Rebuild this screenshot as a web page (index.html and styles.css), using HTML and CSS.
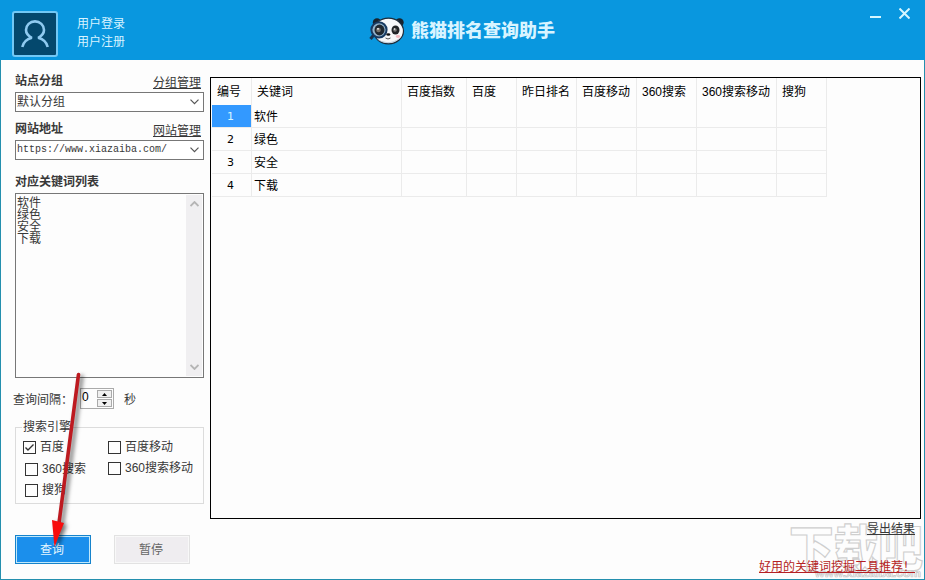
FILE: index.html
```
<!DOCTYPE html>
<html lang="zh-CN">
<head>
  <meta charset="UTF-8">
  <title>熊猫排名查询助手</title>
  <link rel="stylesheet" href="styles.css">
</head>
<body>

  <header class="header">
    <div class="user">
      <div class="avatar">
        <svg width="28" height="28" viewBox="0 0 28 28">
          <path d="M1.300 27C2.300 22.500 5.500 19.300 10.800 17.800C7.500 16 5 13.200 5 10A9 8.600 0 0 1 23 10C23 13.200 20.500 16 17.200 17.800C22.500 19.300 25.700 22.500 26.700 27"/>
        </svg>
      </div>
      <div class="user-links">
        <a>用户登录</a>
        <a>用户注册</a>
      </div>
    </div>
    <div class="brand">
      <svg width="36" height="28" viewBox="0 0 36 28">
        <circle cx="8" cy="5.500" r="4.200" fill="#17232e"/>
        <circle cx="30.500" cy="5.500" r="4.200" fill="#17232e"/>
        <ellipse cx="19.500" cy="14" rx="15" ry="12.800" fill="#f7f8fa" stroke="#1d2c3b" stroke-width="1.200"/>
        <path d="M8 22Q19 29 31 21Q26 26 19 26Q12 26 8 22" fill="#b9c9d7"/>
        <ellipse cx="26.500" cy="13" rx="4" ry="4.600" fill="#202327"/>
        <circle cx="26" cy="13" r="1.800" fill="#777"/>
        <circle cx="25.500" cy="12" r=".8" fill="#fff"/>
        <path d="M5.500 17L1.500 22" stroke="#17344f" stroke-width="3"/>
        <circle cx="10" cy="12.800" r="7.600" fill="#92b2ca" stroke="#173a61" stroke-width="2"/>
        <ellipse cx="10.500" cy="13" rx="5" ry="5.400" fill="#202830"/>
        <circle cx="9.500" cy="13" r="2.300" fill="#77736c"/>
        <circle cx="9" cy="11.800" r=".9" fill="#fff"/>
        <ellipse cx="19.300" cy="17.500" rx="2" ry="1.200" fill="#111"/>
        <path d="M16.500 21Q19 23 21.500 21" stroke="#555" fill="none"/>
        <ellipse cx="29" cy="19.500" rx="2.200" ry="1.400" fill="#f2b9c1"/>
      </svg>
      <h1>熊猫排名查询助手</h1>
    </div>
    <div class="controls">
      <svg width="11" height="11" viewBox="0 0 11 11"><path d="M0 9H11"/></svg>
      <svg width="11" height="11" viewBox="0 0 11 11"><path d="M.5.500L10.500 10.500M10.500.500L.5 10.500"/></svg>
    </div>
  </header>

  <main class="content">
    <aside class="sidebar">
      <div class="field-head">
        <b>站点分组</b>
        <a class="link">分组管理</a>
      </div>
      <div class="select">
        <span>默认分组</span>
        <svg width="9" height="6" viewBox="0 0 9 6"><path d="M.5.700L4.500 4.700L8.500.700"/></svg>
      </div>

      <div class="field-head">
        <b>网站地址</b>
        <a class="link">网站管理</a>
      </div>
      <div class="select">
        <span class="url">https://www.xiazaiba.com/</span>
        <svg width="9" height="6" viewBox="0 0 9 6"><path d="M.5.700L4.500 4.700L8.500.700"/></svg>
      </div>

      <div class="field-head list-head">
        <b>对应关键词列表</b>
      </div>
      <div class="keywords">
        <div>软件<br>绿色<br>安全<br>下载</div>
        <div class="scrollbar">
          <svg width="9" height="6" viewBox="0 0 9 6"><path d="M.5 5L4.500 1L8.500 5"/></svg>
          <svg width="9" height="6" viewBox="0 0 9 6"><path d="M.5 1L4.500 5L8.500 1"/></svg>
        </div>
      </div>

      <div class="interval">
        <span class="interval-label">查询间隔：</span>
        <div class="spinner">
          <span>0</span>
          <div class="steps">
            <i><svg width="5" height="3" viewBox="0 0 5 3"><path d="M0 3L2.500 0L5 3"/></svg></i>
            <i><svg width="5" height="3" viewBox="0 0 5 3"><path d="M0 0L2.500 3L5 0"/></svg></i>
          </div>
        </div>
        <span class="unit">秒</span>
      </div>

      <div class="engines">
        <span class="legend">搜索引擎</span>
        <div class="engine-list left">
          <div class="check first"><i><svg width="11" height="11" viewBox="0 0 11 11"><path d="M1.500 5.500L4 8L9.500 2.500"/></svg></i>百度</div>
          <div class="check"><i></i>360搜索</div>
          <div class="check"><i></i>搜狗</div>
        </div>
        <div class="engine-list">
          <div class="check"><i></i>百度移动</div>
          <div class="check"><i></i>360搜索移动</div>
        </div>
      </div>

      <div class="buttons">
        <button class="btn primary">查询</button>
        <button class="btn">暂停</button>
      </div>
    </aside>

    <section class="main">
      <div class="results">
        <table>
          <colgroup>
            <col class="w-no"><col class="w-word"><col class="w-index"><col class="w-baidu"><col class="w-std"><col class="w-std"><col class="w-std"><col class="w-wide"><col class="w-sogou">
          </colgroup>
          <thead>
            <tr><th>编号</th><th>关键词</th><th>百度指数</th><th>百度</th><th>昨日排名</th><th>百度移动</th><th>360搜索</th><th>360搜索移动</th><th>搜狗</th></tr>
          </thead>
          <tbody>
            <tr><td class="selected">1</td><td>软件</td><td></td><td></td><td></td><td></td><td></td><td></td><td></td></tr>
            <tr><td>2</td><td>绿色</td><td></td><td></td><td></td><td></td><td></td><td></td><td></td></tr>
            <tr><td>3</td><td>安全</td><td></td><td></td><td></td><td></td><td></td><td></td><td></td></tr>
            <tr><td>4</td><td>下载</td><td></td><td></td><td></td><td></td><td></td><td></td><td></td></tr>
          </tbody>
        </table>
      </div>
      <div class="footer">
        <a class="export">导出结果</a>
        <a class="promo">好用的关键词挖掘工具推荐！</a>
      </div>
    </section>
  </main>

  <svg class="watermark" width="136" height="59" viewBox="0 0 136 59">
    <text class="mark" x="0" y="45" textLength="134" lengthAdjust="spacingAndGlyphs">下载吧</text>
    <text class="site" x="26" y="56" textLength="106" lengthAdjust="spacingAndGlyphs">www.xiazaiba.com</text>
  </svg>

  <svg class="arrow" width="50" height="185" viewBox="0 0 50 185">
    <path class="shaft" d="M33.500 4.500L14 153"/>
    <path class="head" d="M7 150L19 153L9.500 177Z"/>
  </svg>

</body>
</html>
```

FILE: styles.css
```
:root {
  --blue: #0997df;
  --frame: #248fae;
  --line: #ebebeb;
  --border: #777;
  --text: #383838;
}

* {
  box-sizing: border-box;
}

body {
  margin: 0;
  width: 925px;
  height: 580px;
  overflow: hidden;
  position: relative;
  display: flex;
  flex-direction: column;
  font: 12px/16px "Liberation Sans", "Noto Sans CJK SC", sans-serif;
  color: var(--text);
  background: #fdfdfd;
}

svg {
  display: block;
  flex: none;
}

/* title bar */
.header {
  height: 60px;
  background: var(--blue);
  color: #d8f4ff;
  display: grid;
  grid-template-columns: 369px 1fr auto;
}

.user {
  display: flex;
  padding: 11px 0 0 12px;
  gap: 19px;
}

.avatar {
  width: 46px;
  height: 46px;
  border: 2px solid #72c8f5;
  border-radius: 3px;
  background: #04486d;
  display: flex;
  align-items: center;
  justify-content: center;
}

.avatar path {
  fill: none;
  stroke: #8fcaf0;
  stroke-width: 2.6;
  stroke-linejoin: bevel;
}

.user-links {
  display: flex;
  flex-direction: column;
  padding-top: 4px;
  line-height: 18px;
}

.brand {
  display: flex;
  gap: 6px;
  padding-top: 17px;
}

h1 {
  margin: 0;
  font-size: 18px;
  font-weight: 900;
  line-height: 28px;
}

.controls {
  display: flex;
  gap: 18px;
  padding: 8px 15px 0 0;
}

.controls path {
  stroke: #d5f6ff;
  stroke-width: 2;
}

/* body */
.content {
  flex: 1;
  display: flex;
  gap: 6px;
  padding: 12px 3px 0 14px;
  border: solid var(--frame);
  border-width: 0 1px 1px;
  position: relative;
  z-index: 1;
}

.sidebar {
  width: 189px;
  flex: none;
}

.field-head {
  height: 20px;
  padding-top: 1px;
  display: flex;
  justify-content: space-between;
}

.field-head .link {
  padding: 2px 3px 0 0;
}

.select + .field-head {
  margin-top: 8px;
}

.sidebar .list-head {
  margin-top: 14px;
  padding-top: 0;
}

.link,
.export,
.promo {
  text-decoration: underline;
  text-underline-offset: 1px;
}

.select {
  height: 20px;
  border: 1px solid var(--border);
  background: #fff;
  display: flex;
  align-items: center;
  justify-content: space-between;
  padding: 0 4px 0 1px;
}

.select path,
.scrollbar path {
  fill: none;
  stroke: #555;
  stroke-width: 1.2;
}

.url {
  font-family: "Liberation Mono", monospace;
  font-size: 10px;
}

.keywords {
  height: 185px;
  margin-top: -1px;
  border: 1px solid var(--border);
  padding: 3px 1px 1px 1px;
  display: flex;
  justify-content: space-between;
  line-height: 12px;
}

.scrollbar {
  width: 16px;
  margin-top: -2px;
  background: #f0eff1;
  display: flex;
  flex-direction: column;
  align-items: center;
  justify-content: space-between;
  padding: 6px 0;
}

.scrollbar path {
  stroke: #b5b5b5;
  stroke-width: 1.8;
}

.interval {
  display: flex;
  height: 22px;
  margin-top: 10px;
}

.interval-label {
  width: 67px;
  margin-left: -2px;
  padding-top: 4px;
  white-space: nowrap;
}

.unit {
  padding-top: 4px;
}

.spinner {
  width: 34px;
  height: 21px;
  border: 1px solid #aaa;
  display: flex;
  justify-content: space-between;
  color: #000;
  margin-right: 10px;
  padding-left: 1px;
}

.steps {
  width: 16px;
  display: flex;
  flex-direction: column;
  gap: 1px;
  padding: 1px 1px 1px 0;
}

.steps i {
  flex: 1;
  border: 1px solid #aaa;
  background: #f0f0f0;
  display: flex;
  align-items: center;
  justify-content: center;
}

.engines {
  position: relative;
  height: 77px;
  margin-top: 17px;
  border: 1px solid #dcdcdc;
  display: flex;
  padding: 11px 0 0 7px;
}

.legend {
  position: absolute;
  top: -9px;
  left: 6px;
  padding: 0 1px;
  background: #fdfdfd;
}

.engine-list {
  display: flex;
  flex-direction: column;
  gap: 5px;
}

.engine-list.left {
  width: 85px;
  padding-left: 2px;
}

.check {
  display: flex;
  align-items: center;
  gap: 4px;
  height: 16px;
  white-space: nowrap;
}

.left .check:nth-child(2) {
  margin-top: 1px;
}

.check.first {
  margin-left: -2px;
}

.check i {
  width: 13px;
  height: 13px;
  flex: none;
  border: 1px solid #333;
}

.check path {
  fill: none;
  stroke: #333;
  stroke-width: 1.4;
}

.buttons {
  display: flex;
  gap: 23px;
  margin-top: 31px;
}

.btn {
  width: 76px;
  height: 29px;
  padding: 0 2px 0 0;
  font: inherit;
  color: #666;
  background: #efedf0;
  border: 1px solid #e2e2e2;
  outline: 1px solid #f8f8f8;
  outline-offset: -2px;
}

.btn.primary {
  color: #e6f7ff;
  background: #1b8fec;
  border-color: #1683cb;
  outline-color: #c0e8fb;
}

/* result grid */
.main {
  flex: 1;
}

.results {
  height: 442px;
  margin-top: 5px;
  border: 1px solid #000;
  padding-left: 1px;
}

table {
  width: 615px;
  table-layout: fixed;
  border-spacing: 0;
  color: #000;
}

.w-no { width: 40px; }
.w-word { width: 150px; }
.w-index { width: 65px; }
.w-baidu { width: 50px; }
.w-std { width: 60px; }
.w-wide { width: 80px; }
.w-sogou { width: 50px; }

th {
  height: 27px;
  padding: 0 0 0 5px;
  text-align: left;
  font-weight: normal;
  white-space: nowrap;
  border-right: 1px solid var(--line);
}

td {
  height: 23px;
  padding: 1px 0 0 2px;
  border: solid var(--line);
  border-width: 0 1px 1px 0;
}

td:first-child {
  text-align: center;
  font: 11px/16px "DejaVu Sans", sans-serif;
  padding: 1px 2px 0 0;
}

td.selected {
  background: #3399ff;
  color: #d8f6ff;
}

.footer {
  display: flex;
  flex-direction: column;
  align-items: flex-end;
  gap: 22px;
  padding: 2px 6px 0 0;
}

.promo {
  color: #b51f24;
}

/* faint mark behind the footer links */
.watermark {
  position: absolute;
  left: 789px;
  top: 521px;
  overflow: visible;
}

.mark {
  font: 900 49px "Noto Sans CJK SC", sans-serif;
  fill: none;
  stroke: #cfcfcf;
  stroke-width: 1.2;
}

.site {
  font: bold 11px "Liberation Sans", sans-serif;
  fill: #fff;
  stroke: #c5c5c5;
  stroke-width: .7;
}

/* pointer over the query button */
.arrow {
  position: absolute;
  z-index: 2;
  left: 45px;
  top: 370px;
  filter: drop-shadow(3px 2px 2px rgba(0, 0, 0, .55));
}

.shaft {
  stroke: #bd1a20;
  stroke-width: 3.6;
  stroke-linecap: round;
}

.head {
  fill: #f80c0c;
}
```
